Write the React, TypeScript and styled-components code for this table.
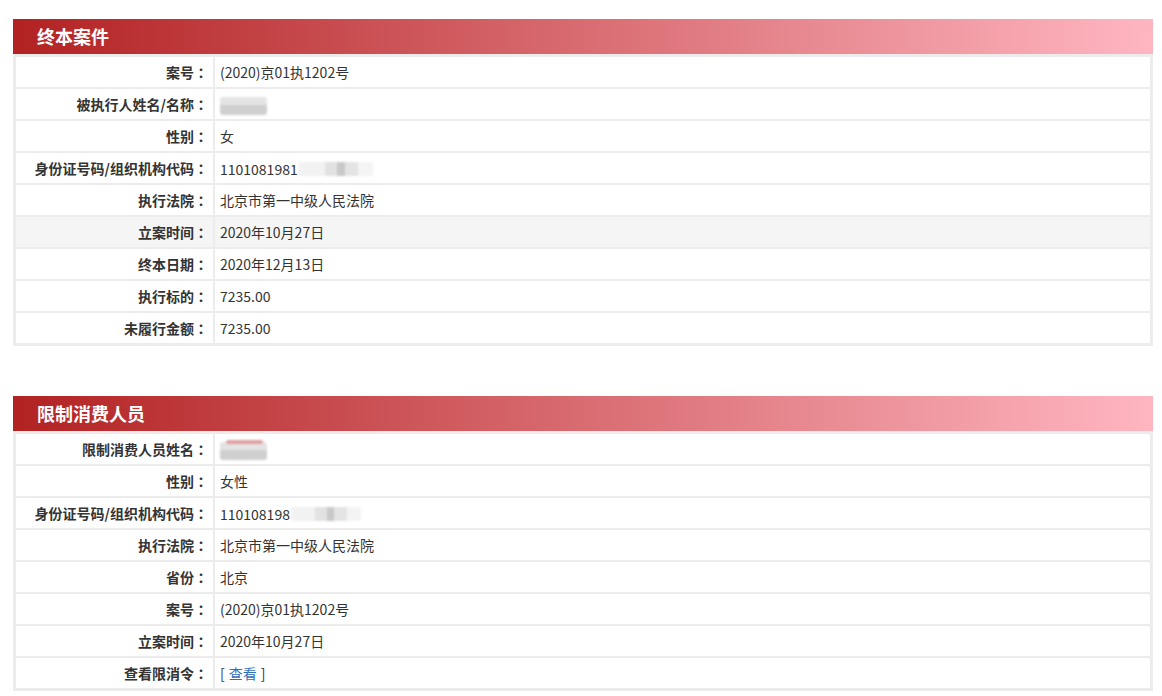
import React from 'react';
import styled, { createGlobalStyle } from 'styled-components';

const GlobalStyle = createGlobalStyle`
  html, body {
    margin: 0;
    padding: 0;
    background: #fff;
  }
  body {
    font-family: "Noto Sans CJK SC", "Noto Sans", sans-serif;
    color: #333;
  }
`;

const Page = styled.div`
  padding: 19px 9px 0 13px;
  width: 1140px;
`;

const Section = styled.section`
  margin-bottom: 50px;
`;

const Title = styled.h3`
  margin: 0;
  height: 35px;
  line-height: 35px;
  padding-left: 24px;
  font-size: 18px;
  font-weight: bold;
  color: #fff;
  background: linear-gradient(to right, #b22222, #ffb6c1);
`;

const Table = styled.table`
  width: 100%;
  border-collapse: separate;
  border-spacing: 2px;
  border: 1px solid #ececec;
  background: #ececec;
  font-size: 14px;
`;

const Row = styled.tr<{ $active?: boolean }>`
  height: 30px;
  background: ${(p) => (p.$active ? '#f5f5f5' : '#fff')};
`;

const Label = styled.th`
  width: 192px;
  padding: 0 5px 0 0;
  text-align: right;
  font-weight: bold;
  color: #333;
  white-space: nowrap;
`;

// centred full-width colon, as in the original's font
const Colon = styled.span`
  font-family: "Noto Sans CJK TC", "Noto Sans CJK SC", sans-serif;
`;

const Value = styled.td`
  padding: 0 0 0 5px;
  color: #333;
  white-space: nowrap;
`;

const Masked = styled.span`
  display: inline-flex;
  align-items: center;
  vertical-align: middle;
`;

const Blur = styled.span<{ $w: number; $tint?: boolean }>`
  display: inline-block;
  position: relative;
  width: ${(p) => p.$w}px;
  height: 18px;
  border-radius: 3px;
  filter: blur(1px);
  vertical-align: middle;
  background: linear-gradient(to bottom, #e4e4e4 0 45%, #cfcfcf 45% 100%);
  &::after {
    content: '';
    position: absolute;
    top: -2px;
    left: 6px;
    right: 4px;
    height: 4px;
    border-radius: 4px;
    background: ${(p) => (p.$tint ? '#e0a0a5' : 'transparent')};
  }
`;

const IdBlur = styled.span<{ $w: number }>`
  display: inline-block;
  width: ${(p) => p.$w}px;
  height: 14px;
  margin-left: 1px;
  filter: blur(1px);
  background: linear-gradient(
    to right,
    #f2f2f2 0 35%,
    #e2e2e2 35% 52%,
    #c9c9c9 52% 62%,
    #e4e4e4 62% 80%,
    #f4f4f4 80% 100%
  );
`;

const Link = styled.a`
  color: #2f6fb6;
  text-decoration: none;
  margin: 0 4px;
`;

type Item = { label: string; value: React.ReactNode; active?: boolean };

const caseItems: Item[] = [
  { label: '案号', value: '(2020)京01执1202号' },
  { label: '被执行人姓名/名称', value: <Blur $w={47} /> },
  { label: '性别', value: '女' },
  {
    label: '身份证号码/组织机构代码',
    value: (
      <Masked>
        1101081981
        <IdBlur $w={74} />
      </Masked>
    ),
  },
  { label: '执行法院', value: '北京市第一中级人民法院' },
  { label: '立案时间', value: '2020年10月27日', active: true },
  { label: '终本日期', value: '2020年12月13日' },
  { label: '执行标的', value: '7235.00' },
  { label: '未履行金额', value: '7235.00' },
];

const limitItems: Item[] = [
  { label: '限制消费人员姓名', value: <Blur $w={47} $tint /> },
  { label: '性别', value: '女性' },
  {
    label: '身份证号码/组织机构代码',
    value: (
      <Masked>
        110108198
        <IdBlur $w={70} />
      </Masked>
    ),
  },
  { label: '执行法院', value: '北京市第一中级人民法院' },
  { label: '省份', value: '北京' },
  { label: '案号', value: '(2020)京01执1202号' },
  { label: '立案时间', value: '2020年10月27日' },
  {
    label: '查看限消令',
    value: (
      <span>
        [<Link href="#">查看</Link>]
      </span>
    ),
  },
];

const InfoBlock = ({ title, items }: { title: string; items: Item[] }) => (
  <Section>
    <Title>{title}</Title>
    <Table>
      <tbody>
        {items.map((it, i) => (
          <Row key={i} $active={it.active}>
            <Label>
              {it.label}
              <Colon>：</Colon>
            </Label>
            <Value>{it.value}</Value>
          </Row>
        ))}
      </tbody>
    </Table>
  </Section>
);

const App = () => (
  <>
    <GlobalStyle />
    <Page>
      <InfoBlock title="终本案件" items={caseItems} />
      <InfoBlock title="限制消费人员" items={limitItems} />
    </Page>
  </>
);

export default App;
